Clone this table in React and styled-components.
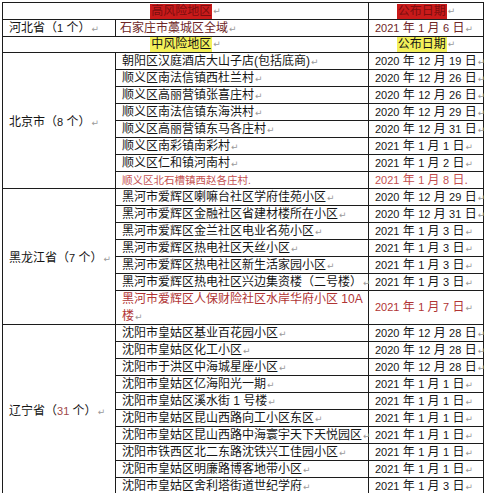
import React from "react";
import styled, { createGlobalStyle } from "styled-components";

const Global = createGlobalStyle`
  html, body { margin: 0; padding: 0; background: #fff; }
  body { font-family: "Liberation Sans", "Noto Sans CJK SC", sans-serif; color: #151515; }
`;

const Page = styled.div`
  padding: 2px 0 0 2px;
`;

const Table = styled.table`
  border-collapse: collapse;
  table-layout: fixed;
  width: 481px;
  font-size: 12px;
`;

const Cell = styled.td`
  border: 1px solid #1c1c1c;
  padding: 0 0 0 ${(p) => p.$pad ?? 6}px;
  text-align: ${(p) => (p.$center ? "center" : "left")};
  vertical-align: middle;
  color: ${(p) => p.$color || "#151515"};
  font-size: ${(p) => p.$size || 12}px;
`;

const Line = styled.div`
  height: ${(p) => p.$h || 16}px;
  line-height: ${(p) => (p.$wrap ? 17 : p.$h || 16)}px;
  white-space: ${(p) => (p.$wrap ? "normal" : "nowrap")};
  overflow: visible;
  display: ${(p) => (p.$wrap ? "block" : "flex")};
  align-items: center;
  justify-content: ${(p) => (p.$center ? "center" : "flex-start")};
`;

const Mark = styled.span`
  background: ${(p) => p.$bg};
  color: ${(p) => p.$fg || "inherit"};
  padding: 0 1px;
  line-height: 15px;
`;

const Num = styled.span`
  font-size: 11px;
`;

const Ret = styled.span`
  font-family: "DejaVu Sans", sans-serif;
  font-size: 9px;
  line-height: 1;
  color: #9a9a9a;
  margin-left: 1px;
`;

const P = () => <Ret>↵</Ret>;

const Date = ({ text }) =>
  text.split(/(\d+)/).map((t, i) =>
    /^\d+$/.test(t) ? <Num key={i}>{t}</Num> : <React.Fragment key={i}>{t}</React.Fragment>
  );

const beijing = [
  ["朝阳区汉庭酒店大山子店(包括底商)", "2020 年 12 月 19 日"],
  ["顺义区南法信镇西杜兰村", "2020 年 12 月 26 日"],
  ["顺义区高丽营镇张喜庄村", "2020 年 12 月 26 日"],
  ["顺义区南法信镇东海洪村", "2020 年 12 月 29 日"],
  ["顺义区高丽营镇东马各庄村", "2020 年 12 月 31 日"],
  ["顺义区南彩镇南彩村", "2021 年 1 月 1 日"],
  ["顺义区仁和镇河南村", "2021 年 1 月 2 日"],
  ["顺义区北石槽镇西赵各庄村.", "2021 年 1 月 8 日.", "red-small"],
];

const hlj = [
  ["黑河市爱辉区喇嘛台社区学府佳苑小区", "2020 年 12 月 29 日"],
  ["黑河市爱辉区金融社区省建材楼所在小区", "2020 年 12 月 31 日"],
  ["黑河市爱辉区金兰社区电业名苑小区", "2021 年 1 月 3 日"],
  ["黑河市爱辉区热电社区天丝小区", "2021 年 1 月 3 日"],
  ["黑河市爱辉区热电社区新生活家园小区", "2021 年 1 月 3 日"],
  ["黑河市爱辉区热电社区兴边集资楼（二号楼）", "2021 年 1 月 3 日"],
  ["黑河市爱辉区人保财险社区水岸华府小区 10A 楼", "2021 年 1 月 7 日", "red-wrap"],
];

const liaoning = [
  ["沈阳市皇姑区基业百花园小区", "2020 年 12 月 28 日"],
  ["沈阳市皇姑区化工小区", "2020 年 12 月 28 日"],
  ["沈阳市于洪区中海城星座小区", "2020 年 12 月 28 日"],
  ["沈阳市皇姑区亿海阳光一期", "2021 年 1 月 1 日"],
  ["沈阳市皇姑区溪水街 1 号楼", "2021 年 1 月 1 日"],
  ["沈阳市皇姑区昆山西路向工小区东区", "2021 年 1 月 1 日"],
  ["沈阳市皇姑区昆山西路中海寰宇天下天悦园区", "2021 年 1 月 1 日"],
  ["沈阳市铁西区北二东路沈铁兴工佳园小区", "2021 年 1 月 1 日"],
  ["沈阳市皇姑区明廉路博客地带小区", "2021 年 1 月 1 日"],
  ["沈阳市皇姑区舍利塔街道世纪学府", "2021 年 1 月 3 日"],
];

const Count = styled.span`
  color: ${(p) => p.$color || "inherit"};
`;

function Group({ name, count, countColor, items }) {
  return items.map(([place, date, kind], i) => {
    const wrap = kind === "red-wrap";
    const small = kind === "red-small";
    const color = wrap ? "#b03434" : small ? "#c45050" : undefined;
    const h = wrap ? 33 : 16;
    return (
      <tr key={place}>
        {i === 0 && (
          <Cell rowSpan={items.length}>
            {name}（<Count $color={countColor}><Num>{count}</Num></Count> 个）
            <P />
          </Cell>
        )}
        <Cell $color={color} $size={small ? 10.5 : 12}>
          <Line $h={h} $wrap={wrap}>
            <span>
              {place}
              {!small && <P />}
            </span>
          </Line>
        </Cell>
        <Cell $color={color}>
          <Line $h={h}>
            <span>
              <Date text={date} />
              {!small && <P />}
            </span>
          </Line>
        </Cell>
      </tr>
    );
  });
}

export default function App() {
  return (
    <Page>
      <Global />
      <Table>
        <colgroup>
          <col style={{ width: 113 }} />
          <col style={{ width: 253 }} />
          <col style={{ width: 115 }} />
        </colgroup>
        <tbody>
          <tr>
            <Cell colSpan={2} $center $pad={0}>
              <Line $h={16} $center>
                <Mark $bg="#c91a1a" $fg="#7c0e0e">高风险地区</Mark>
                <P />
              </Line>
            </Cell>
            <Cell $center $pad={0}>
              <Line $h={16} $center>
                <Mark $bg="#c91a1a" $fg="#7c0e0e">公布日期</Mark>
                <P />
              </Line>
            </Cell>
          </tr>
          <tr>
            <Cell>
              <Line>
                <span>
                  河北省（<Num>1</Num> 个）
                  <P />
                </span>
              </Line>
            </Cell>
            <Cell $color="#6e2626" $pad={4}>
              <Line>
                <span>
                  石家庄市藁城区全域
                  <P />
                </span>
              </Line>
            </Cell>
            <Cell $color="#6e2626">
              <Line>
                <span>
                  <Date text="2021 年 1 月 6 日" />
                  <P />
                </span>
              </Line>
            </Cell>
          </tr>
          <tr>
            <Cell colSpan={2} $center $pad={0}>
              <Line $h={15} $center>
                <Mark $bg="#f3f05a">中风险地区</Mark>
                <P />
              </Line>
            </Cell>
            <Cell $center $pad={0}>
              <Line $h={15} $center>
                <Mark $bg="#f3f05a">公布日期</Mark>
                <P />
              </Line>
            </Cell>
          </tr>
          <Group name="北京市" count="8" items={beijing} />
          <Group name="黑龙江省" count="7" items={hlj} />
          <Group name="辽宁省" count="31" countColor="#a04848" items={liaoning} />
        </tbody>
      </Table>
    </Page>
  );
}
